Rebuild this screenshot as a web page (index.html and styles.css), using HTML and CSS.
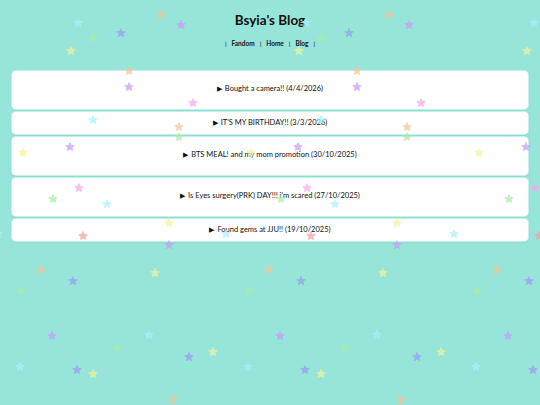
FILE: index.html
```html
<!DOCTYPE html>
<html lang="en">
<head>
<meta charset="utf-8">
<title>Bsyia's Blog</title>
<link rel="stylesheet" href="styles.css">
</head>
<body>
<header class="header">
  <h1 class="title">Bsyia's Blog</h1>
  <nav class="nav">
    <span class="sep">|</span><a class="nav-link" href="#">Fandom</a>
    <span class="sep">|</span><a class="nav-link" href="#">Home</a>
    <span class="sep">|</span><a class="nav-link" href="#">Blog</a>
    <span class="sep">|</span>
  </nav>
</header>
<main class="posts">
  <div class="post tall"><span class="arrow">&#9654;</span> Bought a camera!! (4/4/2026)</div>
  <div class="post"><span class="arrow">&#9654;</span> IT'S MY BIRTHDAY!! (3/3/2026)</div>
  <div class="post tall"><span class="arrow">&#9654;</span> BTS MEAL! and my mom promotion (30/10/2025)</div>
  <div class="post tall"><span class="arrow">&#9654;</span> Is Eyes surgery(PRK) DAY!!! i'm scared (27/10/2025)</div>
  <div class="post"><span class="arrow">&#9654;</span> Found gems at JJU!! (19/10/2025)</div>
</main>
<svg class="stars" width="540" height="405" viewBox="0 0 540 405" aria-hidden="true">
  <defs>
    <path id="s" d="M0,-4.5 L1.25,-1.7 L4.3,-1.4 L2,0.65 L2.65,3.65 L0,2.1 L-2.65,3.65 L-2,0.65 L-4.3,-1.4 L-1.25,-1.7Z"/>
    <pattern id="tile" x="0" y="0" width="228" height="405" patternUnits="userSpaceOnUse">
      <use href="#s" x="161" y="15" class="st peach"/>
      <use href="#s" x="78" y="23" class="st cyan"/>
      <use href="#s" x="181" y="25" class="st purple"/>
      <use href="#s" x="121" y="33" class="st blue"/>
      <use href="#s" x="93" y="38" class="st green"/>
      <use href="#s" x="71" y="51" class="st yellow"/>
      <use href="#s" x="129" y="71" class="st peach"/>
      <use href="#s" x="129" y="87" class="st purple"/>
      <use href="#s" x="193" y="103" class="st pink"/>
      <use href="#s" x="93" y="120" class="st cyan"/>
      <use href="#s" x="179" y="127" class="st peach"/>
      <use href="#s" x="179" y="137" class="st green"/>
      <use href="#s" x="70" y="147" class="st purple"/>
      <use href="#s" x="23" y="153" class="st yellow"/>
      <use href="#s" x="79" y="188" class="st pink"/>
      <use href="#s" x="53" y="199" class="st green"/>
      <use href="#s" x="107" y="204" class="st cyan"/>
      <use href="#s" x="169" y="223" class="st yellow"/>
      <use href="#s" x="226" y="234" class="st cyan"/>
      <use href="#s" x="-2" y="234" class="st cyan"/>
      <use href="#s" x="83" y="236" class="st salmon"/>
      <use href="#s" x="169" y="245" class="st purple"/>
      <use href="#s" x="41" y="270" class="st peach"/>
      <use href="#s" x="155" y="273" class="st yellow"/>
      <use href="#s" x="73" y="281" class="st blue"/>
      <use href="#s" x="21" y="291" class="st green"/>
      <use href="#s" x="149" y="335" class="st cyan"/>
      <use href="#s" x="52" y="336" class="st purple"/>
      <use href="#s" x="117" y="348" class="st green"/>
      <use href="#s" x="213" y="352" class="st yellow"/>
      <use href="#s" x="189" y="357" class="st blue"/>
      <use href="#s" x="20" y="367" class="st cyan"/>
      <use href="#s" x="77" y="370" class="st blue"/>
      <use href="#s" x="93" y="374" class="st yellow"/>
      <use href="#s" x="173" y="400" class="st peach"/>
    </pattern>
  </defs>
  <rect width="540" height="405" fill="url(#tile)"/>
</svg>
</body>
</html>
```

FILE: styles.css
```css
html, body {
  margin: 0;
  padding: 0;
}

body {
  width: 540px;
  height: 405px;
  background: #97e4d9;
  font-family: Lato, "Noto Sans", sans-serif;
  color: #111;
  position: relative;
  overflow: hidden;
}

.header {
  display: flex;
  flex-direction: column;
  align-items: center;
  padding-top: 10px;
}

.title {
  margin: 0;
  font-size: 13.5px;
  font-weight: 700;
  line-height: 20px;
  color: #111;
}

.nav {
  margin-top: 9px;
  display: flex;
  align-items: center;
  gap: 5px;
  font-size: 6.5px;
  font-weight: 700;
  line-height: 10px;
}

.sep {
  font-weight: 400;
}

.nav-link {
  color: #111;
  text-decoration: none;
}

.posts {
  display: flex;
  flex-direction: column;
  gap: 3px;
  padding: 0 12px;
  margin-top: 22px;
}

.post {
  background: #fff;
  border-radius: 4px;
  box-shadow: 0 0 0 1px #c6f1ea, 0 1px 2px rgba(90, 190, 175, 0.5);
  font-size: 7.5px;
  line-height: 10px;
  text-align: center;
  padding: 5px 0 6px;
}

.post.tall {
  padding: 12px 0 15px;
}

.arrow {
  font-size: 7px;
  margin-right: 1px;
}

.stars {
  position: absolute;
  left: 0;
  top: 0;
  pointer-events: none;
}

.st {
  opacity: 0.72;
  stroke-width: 0.8;
  stroke-linejoin: round;
}

.purple { fill: #c59cfa; stroke: #c59cfa; }
.pink { fill: #f5a6f0; stroke: #f5a6f0; }
.cyan { fill: #a6f2fa; stroke: #a6f2fa; }
.peach { fill: #f5c498; stroke: #f5c498; }
.green { fill: #a6eea6; stroke: #a6eea6; }
.yellow { fill: #f3f398; stroke: #f3f398; }
.salmon { fill: #f59e9e; stroke: #f59e9e; }
.blue { fill: #9a9af2; stroke: #9a9af2; }
```
